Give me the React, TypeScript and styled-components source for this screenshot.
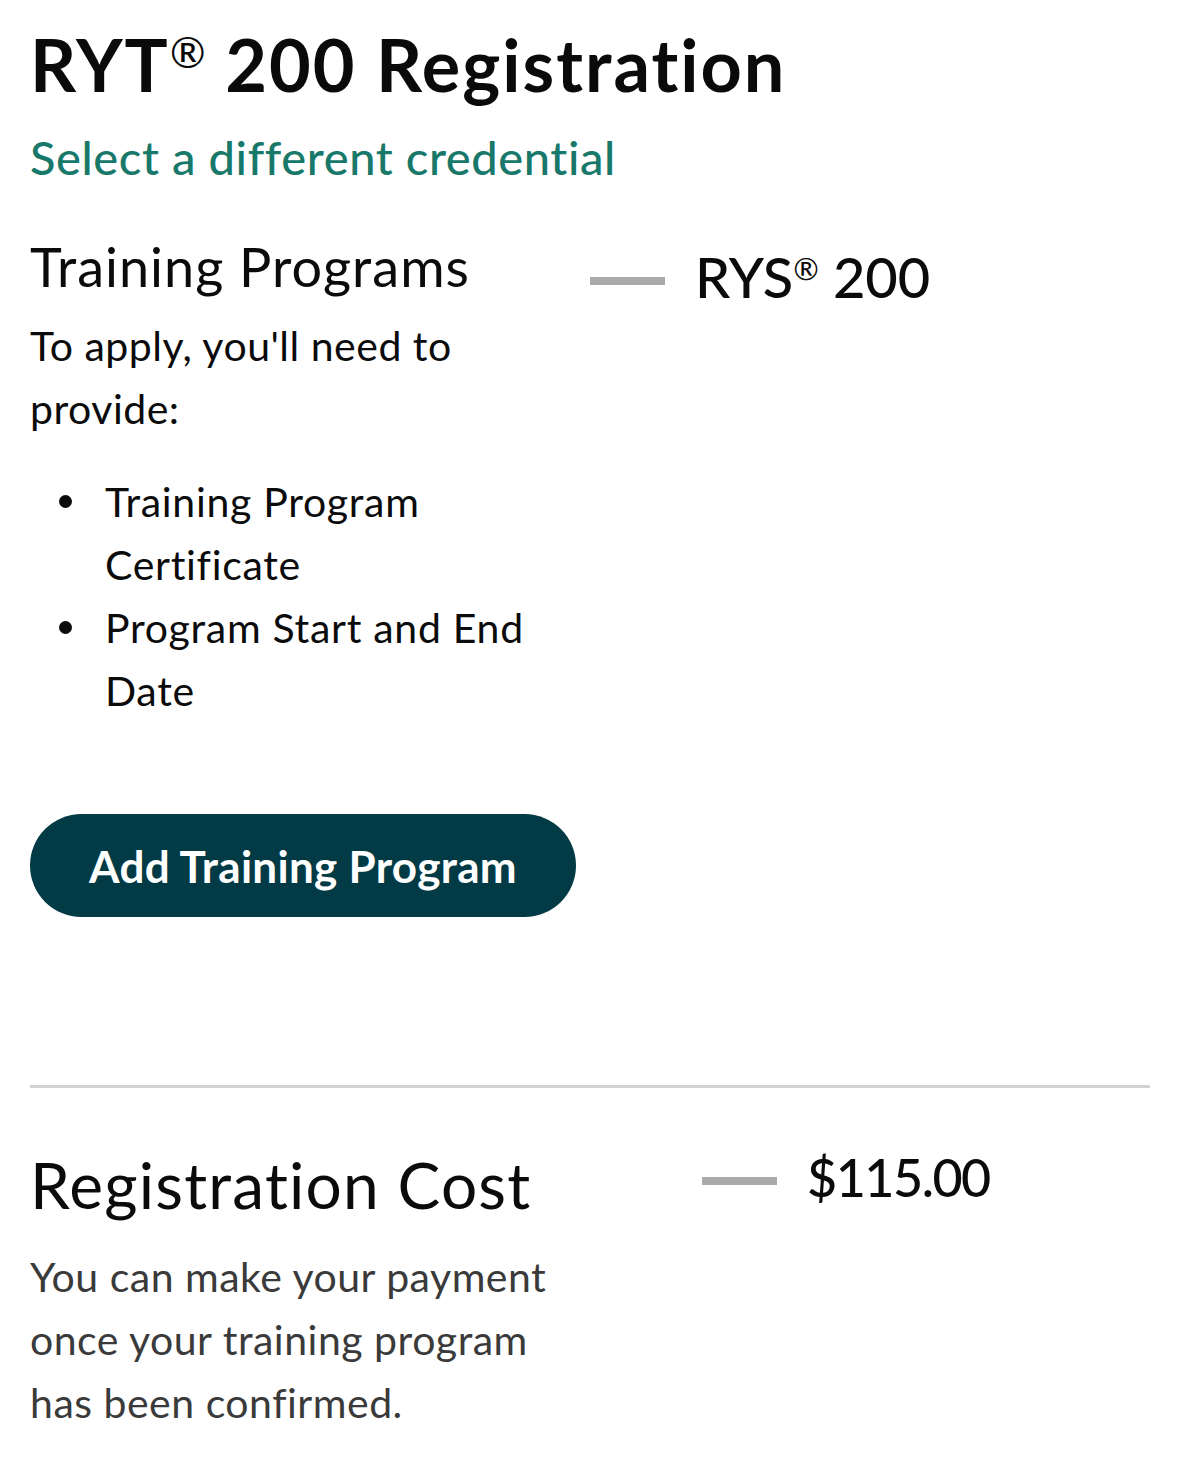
import React from "react";
import styled, { createGlobalStyle } from "styled-components";

const GlobalStyle = createGlobalStyle`
  html, body { margin: 0; padding: 0; background: #ffffff; }
  body {
    font-family: Lato, "Noto Sans", sans-serif;
    color: #0b0b0b;
    -webkit-font-smoothing: antialiased;
  }
  * { box-sizing: border-box; }
`;

const Page = styled.main`
  padding: 21px 29px 40px 30px;
  display: flex;
  flex-direction: column;
`;

const Title = styled.h1`
  margin: 0;
  font-size: 72px;
  line-height: 86px;
  font-weight: 700;
  letter-spacing: 2px;
  color: #0a0a0a;
  sup { font-size: 0.6em; font-weight: 400; vertical-align: 0.55em; line-height: 0; letter-spacing: 0; }
`;

const SwitchLink = styled.a`
  display: block;
  margin-top: 22px;
  font-size: 47px;
  line-height: 56px;
  font-weight: 500;
  letter-spacing: 0.6px;
  color: #18786a;
  text-decoration: none;
`;

const Row = styled.section<{ $leftWidth: number; $top: number }>`
  display: grid;
  grid-template-columns: ${(p) => p.$leftWidth}px 1fr;
  margin-top: ${(p) => p.$top}px;
  align-items: start;
`;

const LeftCol = styled.div`
  display: flex;
  flex-direction: column;
`;

const SectionTitle = styled.h2<{ $size: number; $spacing: number }>`
  margin: 0;
  font-size: ${(p) => p.$size}px;
  line-height: ${(p) => Math.round(p.$size * 1.2)}px;
  letter-spacing: ${(p) => p.$spacing}px;
  font-weight: 400;
  color: #0b0b0b;
`;

const Body = styled.p<{ $muted?: boolean; $top: number }>`
  margin: ${(p) => p.$top}px 0 0;
  font-size: 41px;
  line-height: 63px;
  letter-spacing: 0.5px;
  color: ${(p) => (p.$muted ? "#3a3a3a" : "#0b0b0b")};
`;

const List = styled.ul`
  margin: 30px 0 0;
  padding: 0 0 0 29px;
  list-style: none;
  font-size: 41px;
  line-height: 63px;
  letter-spacing: 0.7px;
`;

const Item = styled.li`
  display: grid;
  grid-template-columns: 46px 1fr;
  &::before {
    content: "";
    width: 13px;
    height: 13px;
    margin-top: 25px;
    border-radius: 50%;
    background: #0b0b0b;
  }
`;

const ValueBlock = styled.div<{ $offset: number; $top: number }>`
  display: flex;
  align-items: flex-start;
  gap: 30px;
  margin-left: ${(p) => p.$offset}px;
  margin-top: ${(p) => p.$top}px;
`;

const Dash = styled.span<{ $top: number }>`
  display: block;
  flex: none;
  width: 75px;
  height: 8px;
  margin-top: ${(p) => p.$top}px;
  background: #aaaaaa;
`;

const Value = styled.span<{ $size: number; $spacing: number }>`
  font-size: ${(p) => p.$size}px;
  line-height: ${(p) => Math.round(p.$size * 1.2)}px;
  letter-spacing: ${(p) => p.$spacing}px;
  font-weight: 500;
  color: #0b0b0b;
  white-space: nowrap;
  sup { font-size: 0.55em; vertical-align: 0.6em; line-height: 0; font-weight: 400; letter-spacing: 0; }
`;

const PrimaryButton = styled.button`
  margin-top: 92px;
  align-self: flex-start;
  width: 546px;
  height: 103px;
  padding: 0;
  border: none;
  border-radius: 52px;
  background: #023a45;
  color: #ffffff;
  font-family: inherit;
  font-size: 44px;
  font-weight: 700;
  letter-spacing: 0.3px;
  cursor: pointer;
`;

const Divider = styled.hr`
  margin: 168px 0 0;
  border: none;
  height: 3px;
  background: #d2d2d2;
`;

export default function App() {
  return (
    <>
      <GlobalStyle />
      <Page>
        <Title>
          RYT<sup>®</sup> 200 Registration
        </Title>
        <SwitchLink href="#">Select a different credential</SwitchLink>

        <Row $leftWidth={560} $top={49}>
          <LeftCol>
            <SectionTitle $size={54} $spacing={1}>
              Training Programs
            </SectionTitle>
            <Body $top={15}>To apply, you'll need to provide:</Body>
            <List>
              <Item>Training Program Certificate</Item>
              <Item>Program Start and End Date</Item>
            </List>
            <PrimaryButton>Add Training Program</PrimaryButton>
          </LeftCol>
          <ValueBlock $offset={0} $top={9}>
            <Dash $top={34} />
            <Value $size={56} $spacing={0}>
              RYS<sup>®</sup> 200
            </Value>
          </ValueBlock>
        </Row>

        <Divider />

        <Row $leftWidth={560} $top={58}>
          <LeftCol>
            <SectionTitle $size={64} $spacing={1.2}>
              Registration Cost
            </SectionTitle>
            <Body $muted $top={22}>
              You can make your payment once your training program has been confirmed.
            </Body>
          </LeftCol>
          <ValueBlock $offset={112} $top={0}>
            <Dash $top={31} />
            <Value $size={52} $spacing={-1.5}>
              $115.00
            </Value>
          </ValueBlock>
        </Row>
      </Page>
    </>
  );
}
